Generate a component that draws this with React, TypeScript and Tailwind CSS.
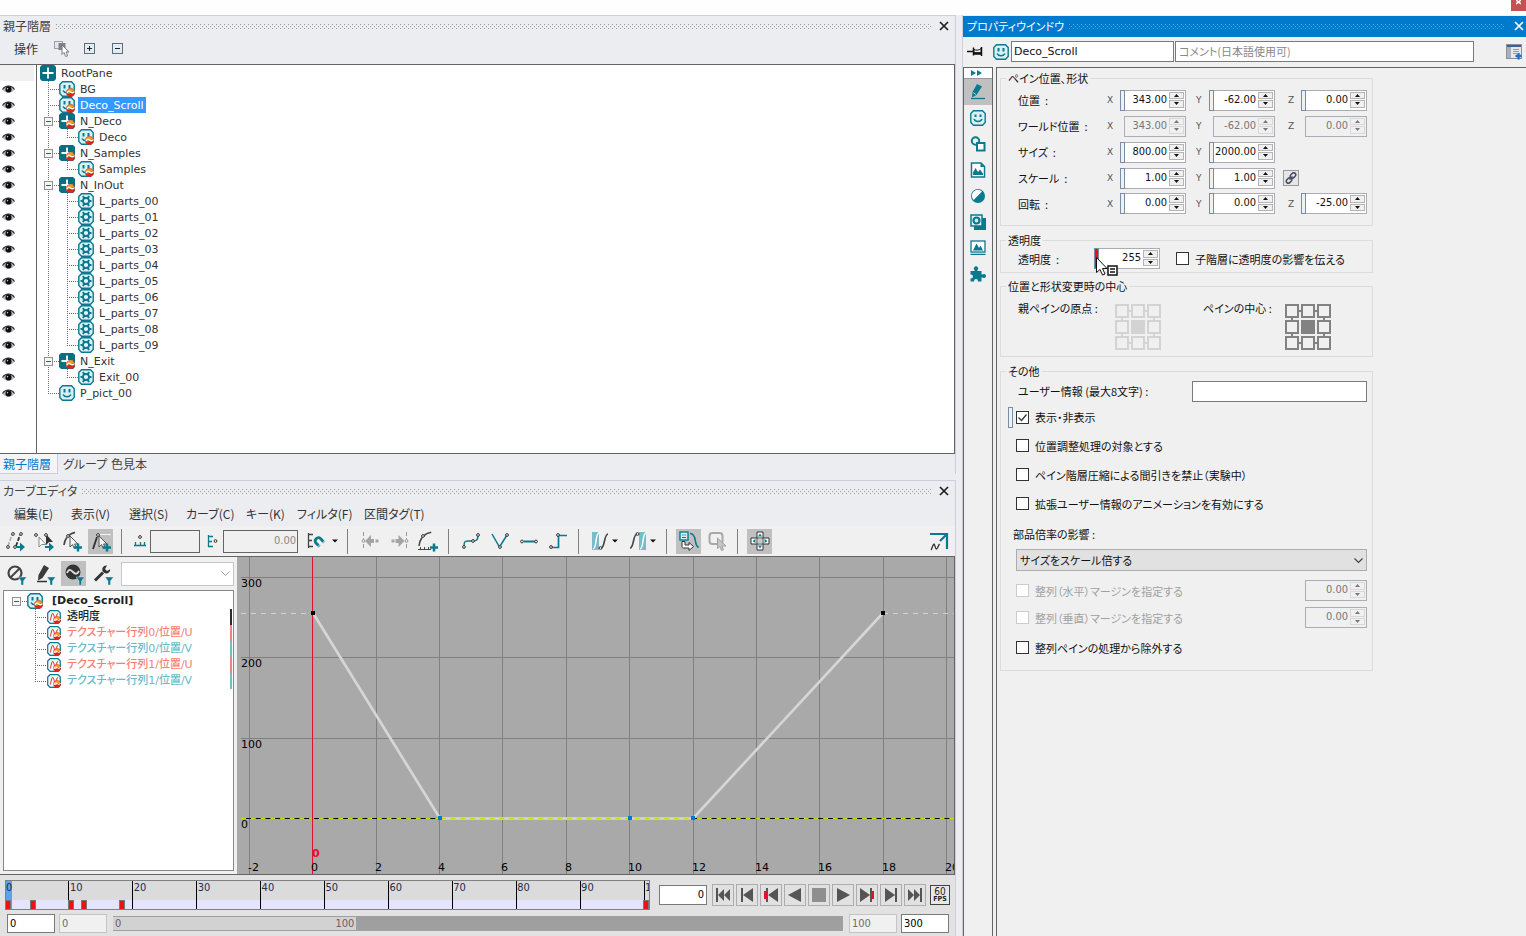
import { useId, type ReactNode } from "react";

const TEAL = "#0b7a8f";
const UI = "font-['Noto_Sans_CJK_JP',sans-serif] [font-feature-settings:'palt']";
const NUM = "font-['DejaVu_Sans_Condensed','DejaVu_Sans',sans-serif]";
const TREE = "font-['DejaVu_Sans','Noto_Sans_CJK_JP',sans-serif] [font-feature-settings:'palt']";

/* ---------- small drawings ---------- */

function Grip({ color }: { color: string }) {
  const id = useId();
  return (
    <svg className="h-[5px] min-w-0 flex-1" aria-hidden="true">
      <pattern id={id} width="4" height="4" patternUnits="userSpaceOnUse">
        <rect width="1" height="1" fill={color} />
        <rect x="2" y="2" width="1" height="1" fill={color} />
      </pattern>
      <rect width="100%" height="5" fill={`url(#${id})`} />
    </svg>
  );
}

function Cross({ color }: { color: string }) {
  return (
    <svg width="10" height="10" viewBox="0 0 10 10" fill="none" stroke={color} strokeWidth="1.7">
      <path d="M1 1l8 8M9 1l-8 8" />
    </svg>
  );
}

function Badge() {
  return (
    <>
      <path d="M7.500 11.500a4 4 0 0 1 8 0z" fill="#f0a020" />
      <path d="M7.500 11.500a4 4 0 0 0 8 0c-1.500-1.500-2.500-1-3.800 0s-3 1.500-4.200 0z" fill="#e2231a" />
      <circle cx="11.500" cy="11.500" r="4.200" fill="none" stroke="#e2231a" strokeWidth=".6" />
      <path d="M7.800 12c1.200-1.800 2.400-2 3.700-1s2.500 1.300 4-.4" stroke="#fff" strokeWidth="1.200" fill="none" />
    </>
  );
}

type Kind = "root" | "null" | "pic" | "picPlain" | "parts" | "curve";

const frame = "M3.500.800h9l2.700 2.700v9l-2.700 2.700h-9L.8 12.500v-9z";

function PaneIcon({ kind, size = 16 }: { kind: Kind; size?: number }) {
  return (
    <svg width={size} height={size} viewBox="0 0 16 16" className="shrink-0" aria-hidden="true">
      {(kind === "root" || kind === "null") && (
        <>
          <path d="M2 0h12l2 2v12l-2 2H2l-2-2V2z" fill="#086f85" />
          <path d="M8 2.500v11M2.500 8h11" stroke="#fff" strokeWidth="1.800" />
        </>
      )}
      {(kind === "pic" || kind === "picPlain") && (
        <>
          <path d={frame} fill="#d9f0f5" stroke={TEAL} strokeWidth="1.400" />
          <path d="M4.500 4h2v3.500h-2zM9.500 4h2v3.500h-2z" fill={TEAL} />
          <path d="M4 9.500c1.500 3 6.500 3 8 0" stroke={TEAL} strokeWidth="1.600" fill="none" />
        </>
      )}
      {kind === "parts" && (
        <>
          <path d={frame} fill="#d9f0f5" stroke={TEAL} strokeWidth="1.400" />
          <circle cx="8" cy="8" r="3" fill="#e9f8fb" stroke={TEAL} strokeWidth="1.800" />
          <path d="M5 3l1.300 2.400M11 3L9.700 5.400M5 13l1.300-2.400M11 13l-1.300-2.400M2.500 8H5M11 8h2.500" stroke={TEAL} strokeWidth="2" />
        </>
      )}
      {kind === "curve" && (
        <>
          <path d={frame} fill="#f1f8fa" stroke={TEAL} strokeWidth="1.400" />
          <path d="M3.500 12c1.500-1 1-8 3-8s1 5 2.500 5 1.500-4 3.500-5" stroke="#d34a4a" strokeWidth="1.200" fill="none" />
        </>
      )}
      {(kind === "null" || kind === "pic" || kind === "curve") && <Badge />}
    </svg>
  );
}

function Eye() {
  return (
    <svg width="13" height="9" viewBox="0 0 13 9" aria-hidden="true">
      <path d="M.5 4.500C3-.2 10-.2 12.500 4.500 10 9 3 9 .5 4.500z" fill="#bbb" />
      <path d="M.5 4.500C3 0 10 0 12.500 4.500" fill="none" stroke="#333" strokeWidth="1.200" />
      <circle cx="6.500" cy="4.500" r="3" fill="#0a0a14" />
      <circle cx="5.500" cy="3.700" r=".7" fill="#ddd" />
    </svg>
  );
}

type Guide = "tee" | "end" | "line" | "blank" | "teeBox" | "endBox";

function GuideCell({ type, first }: { type: Guide; first?: boolean }) {
  const box = type === "teeBox" || type === "endBox";
  const half = type === "end" || type === "endBox";
  return (
    <svg width="19" height="16" viewBox="0 0 19 16" className="shrink-0" shapeRendering="crispEdges" aria-hidden="true">
      {type !== "blank" && !first && (
        <path d={half ? "M8.500 0v9" : "M8.500 0v16"} stroke="#707070" strokeDasharray="1 1" />
      )}
      {type !== "blank" && type !== "line" && <path d="M8 8.500h11" stroke="#707070" strokeDasharray="1 1" />}
      {box && (
        <>
          <rect x="4.500" y="4.500" width="8" height="8" fill="#f6f6f6" stroke="#919191" />
          <path d="M6 8.500h5" stroke="#33539b" />
        </>
      )}
    </svg>
  );
}

/* ---------- hierarchy panel ---------- */

type Row = { name: string; kind: Kind; guides: Guide[]; selected?: boolean };

const rows: Row[] = [
  { name: "RootPane", kind: "root", guides: [] },
  { name: "BG", kind: "pic", guides: ["tee"] },
  { name: "Deco_Scroll", kind: "pic", guides: ["tee"], selected: true },
  { name: "N_Deco", kind: "null", guides: ["teeBox"] },
  { name: "Deco", kind: "pic", guides: ["line", "end"] },
  { name: "N_Samples", kind: "null", guides: ["teeBox"] },
  { name: "Samples", kind: "pic", guides: ["line", "end"] },
  { name: "N_InOut", kind: "null", guides: ["teeBox"] },
  ...Array.from({ length: 10 }, (_, i): Row => ({
    name: `L_parts_0${i}`,
    kind: "parts",
    guides: ["line", i === 9 ? "end" : "tee"],
  })),
  { name: "N_Exit", kind: "null", guides: ["teeBox"] },
  { name: "Exit_00", kind: "parts", guides: ["line", "end"] },
  { name: "P_pict_00", kind: "picPlain", guides: ["end"] },
];

function TitleBar({ title }: { title: string }) {
  return (
    <header className="flex h-[21px] items-center gap-[5px] pr-[6px] pb-px pl-[3px]">
      <h2 className="text-[12px] leading-4 whitespace-nowrap text-[#444]">{title}</h2>
      <Grip color="#999" />
      <button type="button" aria-label="閉じる" className="ml-[2px]">
        <Cross color="#1e1e1e" />
      </button>
    </header>
  );
}

function HierarchyPanel() {
  return (
    <section className="border-t border-r border-[#cccedb]">
      <TitleBar title="親子階層" />
      <div className="flex h-[27px] items-center pb-1 pl-[14px] text-[12px] text-[#333]">
        <button type="button" className="w-[40px] text-left leading-4">操作</button>
        <button type="button" aria-label="選択" className="mr-[14px]">
          <svg width="16" height="16" viewBox="0 0 16 16">
            <rect x=".5" y=".5" width="8" height="7" fill="#e4e8ee" stroke="#9aa1ac" />
            <rect x="4.500" y="2" width="7" height="7" fill="#7d828a" />
            <path d="M8 4v9.500l2-2 1.700 4 2-.8-1.700-3.700H15z" fill="#fff" stroke="#777" />
          </svg>
        </button>
        <button type="button" aria-label="展開" className="mr-[17px]">
          <svg width="11" height="11" viewBox="0 0 11 11" shapeRendering="crispEdges">
            <rect x=".5" y=".5" width="10" height="10" fill="#e4ecf3" stroke="#5b6e80" />
            <path d="M3 5.500h5M5.500 3v5" stroke="#222" />
          </svg>
        </button>
        <button type="button" aria-label="折りたたみ">
          <svg width="11" height="11" viewBox="0 0 11 11" shapeRendering="crispEdges">
            <rect x=".5" y=".5" width="10" height="10" fill="#e4ecf3" stroke="#5b6e80" />
            <path d="M3 5.500h5" stroke="#222" />
          </svg>
        </button>
      </div>
      <div className="flex min-h-[390px] border-y border-r border-[#646464] bg-white">
        <div className="w-[37px] shrink-0 border-r border-[#646464]">
          {rows.map((r, i) =>
            i === 0 ? (
              <div key={r.name} className="mr-[2px] h-4 bg-[#f0f0f0]" />
            ) : (
              <div key={r.name} className="flex h-4 items-center pl-[2px]">
                <Eye />
              </div>
            )
          )}
        </div>
        <ul className={`pl-[3px] text-[11px] leading-4 text-[#333] ${TREE}`}>
          {rows.map((r) => (
            <li key={r.name} className="flex h-4 items-center">
              {r.guides.map((g, i) => (
                <GuideCell key={i} type={g} />
              ))}
              <PaneIcon kind={r.kind} />
              <span className={r.selected ? "ml-[3px] h-4 bg-[#3399ff] px-[2px] pt-[2px] leading-[14px] text-white" : "ml-[3px] h-4 px-[2px] pt-[2px] leading-[14px]"}>
                {r.name}
              </span>
            </li>
          ))}
        </ul>
      </div>
      <nav className="flex h-5 text-[12px] leading-5 text-[#444]">
        <button type="button" className="w-[58px] border-r border-b border-[#cccedb] bg-[#f5f5f8] pl-[3px] text-left text-[#007acc]">
          親子階層
        </button>
        <button type="button" className="w-[50px] pl-[5px] text-left whitespace-nowrap">グループ</button>
        <button type="button" className="pl-[3px]">色見本</button>
      </nav>
    </section>
  );
}

/* ---------- curve editor ---------- */

function Tool({ label, active, children }: { label: string; active?: boolean; children: ReactNode }) {
  return (
    <button
      type="button"
      aria-label={label}
      className={
        active
          ? "flex h-[25px] w-[25px] shrink-0 items-center justify-center bg-[#c0c0c0]"
          : "flex h-[25px] w-[25px] shrink-0 items-center justify-center"
      }
    >
      <svg width="22" height="22" viewBox="0 0 22 22" fill="none">
        {children}
      </svg>
    </button>
  );
}

const Sep = () => <span className="h-[25px] w-px shrink-0 bg-[#808080]" />;

const Caret = () => (
  <svg width="6" height="4" viewBox="0 0 6 4" className="shrink-0">
    <path d="M0 .5h6L3 3.500z" fill="#111" />
  </svg>
);

const Plus = () => <path d="M13 17.500h8M17 13.500v8" stroke={TEAL} strokeWidth="2.500" />;
const Arrow = () => <path d="M13 16h4v-3.500l5 4.500-5 4.500V18h-4z" fill={TEAL} />;
const Pointer = () => <path d="M9 6v11l2.500-2.500 1.800 4 2-1-1.800-3.500H17z" fill="#f4f4f4" stroke="#555" />;
const Dot = ({ x, y }: { x: number; y: number }) => (
  <circle cx={x} cy={y} r="1.400" fill="#f0f0f0" stroke="#333" />
);

function CurveToolbar() {
  return (
    <div className="flex h-[30px] items-center overflow-hidden bg-[#f0f0f0] pl-px">
      <div className="flex gap-1">
        <Tool label="キー移動">
          <path d="M5 16L9 5" stroke="#aaa" strokeWidth="1.600" strokeDasharray="4 1.500" />
          <path d="M13 16l4-11" stroke="#333" strokeWidth="1.800" strokeDasharray="4 1.500" />
          <Dot x={5} y={17} />
          <Dot x={10} y={4} />
          <Dot x={12} y={17} />
          <Dot x={18} y={4} />
          <Arrow />
        </Tool>
        <Tool label="キー選択">
          <path d="M7 7v10l2.500-2.500H14z" fill="#fff" stroke="#888" />
          <path d="M14 4v11l3-3h4z" fill="#333" />
          <Dot x={4} y={5} />
          <Dot x={14} y={5} />
          <Arrow />
        </Tool>
        <Tool label="曲線キー追加">
          <path d="M3 15C4 8 8 3 16 2" stroke="#444" strokeWidth="1.700" strokeDasharray="8 2" />
          <Pointer />
          <Dot x={7} y={6} />
          <Plus />
        </Tool>
        <Tool label="直線キー追加" active>
          <path d="M3 19L7 7" stroke="#333" strokeWidth="1.900" />
          <path d="M10 4.500h11" stroke="#f4f4f4" />
          <Pointer />
          <Dot x={8} y={5} />
          <Plus />
        </Tool>
      </div>
      <span className="ml-2" />
      <Sep />
      <svg width="14" height="14" viewBox="0 0 14 14" className="ml-[11px] shrink-0" fill="none">
        <path d="M1 11.500h12M2.500 8v4M7.500 8v4M11.500 8v4" stroke={TEAL} strokeWidth="1.300" />
        <Dot x={7} y={3} />
      </svg>
      <input aria-label="フレーム" className="ml-[3px] h-[23px] w-[50px] shrink-0 border border-[#646464] bg-[#f0f0f0] px-1" />
      <svg width="11" height="14" viewBox="0 0 11 14" className="ml-[7px] shrink-0" fill="none">
        <path d="M1.500 1v12M1 2.500h5M1 7.500h4M1 12.500h5" stroke={TEAL} strokeWidth="1.300" />
        <Dot x={8.5} y={7} />
      </svg>
      <input
        aria-label="値"
        defaultValue="0.00"
        className={`ml-[5px] h-[23px] w-[75px] shrink-0 border border-[#646464] bg-[#f0f0f0] pr-[1px] pb-[2px] text-right text-[11px] text-[#888] ${NUM}`}
      />
      <button type="button" aria-label="スナップ" className="ml-[9px] flex shrink-0 items-center gap-[6px]">
        <svg width="19" height="18" viewBox="0 0 19 18" fill="none">
          <path d="M1.500 1v15M1 2.500h5M1 8.500h4M1 14.500h5" stroke="#444" strokeWidth="1.300" />
          <path d="M12.500 14.500L9 11c-2.500-3 1.500-7 4.500-4.500l3.500 4" stroke={TEAL} strokeWidth="2.800" />
          <path d="M10.500 15l3.500-3.500M15 11.500l3-3" stroke="#f0f0f0" />
        </svg>
        <Caret />
      </button>
      <span className="ml-[9px]" />
      <Sep />
      <div className="mr-[8px] ml-[9px] flex shrink-0 gap-1">
        <Tool label="前へ">
          <path d="M4.500 2v18" stroke="#999" strokeDasharray="4 2" />
          <path d="M6 11l6-6v12zM12 9h3v4h-3zM16.500 9.500h3v3h-3z" fill="#a4a4a4" />
          <circle cx="4.500" cy="11" r="1.400" fill="#f0f0f0" stroke="#999" />
        </Tool>
        <Tool label="次へ">
          <path d="M18.500 2v18" stroke="#999" strokeDasharray="4 2" />
          <path d="M16.500 11l-6-6v12zM7.500 9h3v4h-3zM3.500 9.500h3v3h-3z" fill="#a4a4a4" />
          <circle cx="18.500" cy="11" r="1.400" fill="#f0f0f0" stroke="#999" />
        </Tool>
        <Tool label="補間キー">
          <path d="M2 16C3 8 7 3 16 2" stroke="#444" strokeWidth="1.600" strokeDasharray="9 2" />
          <path d="M1 19.500h13M3.500 17v3M7.500 17v3M11.500 17v3" stroke="#444" />
          <Dot x={6} y={6} />
          <Plus />
        </Tool>
      </div>
      <Sep />
      <div className="mr-[8px] ml-[9px] flex shrink-0 gap-1">
        <Tool label="スプライン">
          <path d="M4 16c0-6 2-5 7-5s7 0 7-6" stroke={TEAL} strokeWidth="1.500" />
          <Dot x={4} y={17} />
          <Dot x={13} y={11} />
          <Dot x={18} y={5} />
        </Tool>
        <Tool label="直線">
          <path d="M3 4l7.500 13L18 5" stroke={TEAL} strokeWidth="1.500" />
          <Dot x={11} y={17} />
          <Dot x={18} y={5} />
        </Tool>
        <Tool label="水平">
          <path d="M6 11.500h11" stroke={TEAL} strokeWidth="2" />
          <Dot x={4} y={11.5} />
          <Dot x={18} y={11.5} />
        </Tool>
        <Tool label="ステップ">
          <path d="M5 17.500h6.500v-12H20" stroke={TEAL} strokeWidth="1.700" />
          <Dot x={4} y={17} />
          <Dot x={11} y={5} />
        </Tool>
      </div>
      <Sep />
      <button type="button" aria-label="前補間" className="ml-3 flex h-[25px] w-[34px] shrink-0 items-center gap-[3px]">
        <svg width="18" height="20" viewBox="0 0 18 20" fill="none">
          <rect x="1" y="1" width="7" height="18" fill="#78bcc8" />
          <path d="M2 18c4 0 2-16 6-16" stroke="#fff" strokeWidth="1.500" />
          <path d="M10 17c4 0 3-14 7-14" stroke="#444" strokeWidth="1.600" />
          <Dot x={9.5} y={17} />
        </svg>
        <Caret />
      </button>
      <button type="button" aria-label="後補間" className="ml-1 flex h-[25px] w-[34px] shrink-0 items-center gap-[3px]">
        <svg width="18" height="20" viewBox="0 0 18 20" fill="none">
          <rect x="10" y="1" width="7" height="18" fill="#78bcc8" />
          <path d="M11 18c4 0 2-16 6-16" stroke="#fff" strokeWidth="1.500" />
          <path d="M1 17c4 0 3-14 7-14" stroke="#444" strokeWidth="1.600" />
          <Dot x={8.5} y={3} />
        </svg>
        <Caret />
      </button>
      <span className="ml-[3px]" />
      <Sep />
      <div className="mr-[7px] ml-[9px] flex shrink-0 gap-1">
        <Tool label="ペイン連動" active>
          <rect x="2" y="2" width="8" height="8" fill="#d9f0f5" stroke={TEAL} strokeWidth="1.400" />
          <path d="M4 5h1.500M6.500 5H8M4 7.500h4" stroke={TEAL} strokeWidth="1.200" />
          <path d="M12 3.500c4 0 5 4 5.500 8 .5 3.500 1.500 5 3 6" stroke={TEAL} strokeWidth="1.600" />
          <path d="M4 11.500v5c0 1 .5 1.500 1.500 1.500H11v2.500l4.500-4-4.500-4V15H7v-3.500z" fill="#fff" stroke="#333" />
        </Tool>
        <Tool label="選択連動">
          <rect x="2.500" y="3" width="13" height="11" rx="3" stroke="#a8a8a8" strokeWidth="2" />
          <path d="M10.500 8v10.500l2.500-2 1.500 4 2-.8-1.500-3.700H19z" fill="#c6c6c6" stroke="#a0a0a0" />
        </Tool>
      </div>
      <Sep />
      <span className="ml-[9px]" />
      <Tool label="全体表示" active>
        <path d="M8 2h6v6H8zM8 14h6v6H8zM2 8h6v6H2zM14 8h6v6h-6z" fill="#fff" stroke="#333" />
        <path d="M8.500 8.500h5v5h-5z" fill="#c8c8c8" />
        <path d="M11 3.500l2 3H9zM11 18.500l2-3H9zM3.500 11l3-2v4zM18.500 11l-3-2v4z" fill={TEAL} />
      </Tool>
      <button type="button" aria-label="拡大" className="mr-[6px] ml-auto shrink-0">
        <svg width="19" height="19" viewBox="0 0 19 19" fill="none">
          <path d="M0 2h17v15M17 2l-7 7" stroke={TEAL} strokeWidth="2.200" />
          <path d="M1 18c1-1 1.500-5 3-6 1 0 1 5 2.500 5 1 0 1.500-3 3-5" stroke="#333" strokeWidth="1.300" />
        </svg>
      </button>
    </div>
  );
}

const Funnel = () => <path d="M13 14h8.500L18.500 18v4h-2.500v-4z" fill={TEAL} stroke="#f0f0f0" strokeWidth=".4" />;

const curves = [
  { name: "透明度", text: "text-[#222]", bar: "bg-[#2b2b2b]" },
  { name: "テクスチャー行列0/位置/U", text: "text-[#f57f76]", bar: "bg-[#f58080]" },
  { name: "テクスチャー行列0/位置/V", text: "text-[#6abac4]", bar: "bg-[#74bdc5]" },
  { name: "テクスチャー行列1/位置/U", text: "text-[#f57f76]", bar: "bg-[#f58080]" },
  { name: "テクスチャー行列1/位置/V", text: "text-[#6abac4]", bar: "bg-[#74bdc5]" },
];

function CurveList() {
  return (
    <div className="flex w-[237px] shrink-0 flex-col bg-[#f0f0f0] pr-[3px] pb-[3px] pl-[3px]">
      <div className="flex h-[33px] items-center gap-1">
        <div className="flex w-[114px] gap-1">
          <Tool label="クリア">
            <circle cx="10" cy="10" r="6.500" stroke="#444" strokeWidth="2.200" />
            <path d="M5.500 14.500l9-9" stroke="#444" strokeWidth="2" />
            <Funnel />
          </Tool>
          <Tool label="編集">
            <path d="M10 2l5 3-6.500 10L4 17.500l.5-5.500z" fill="#3a3a3a" />
            <path d="M3 18.500h10" stroke="#333" strokeWidth="1.500" />
            <Funnel />
          </Tool>
          <Tool label="カーブ表示" active>
            <circle cx="10" cy="9" r="7.500" fill="#333" />
            <path d="M4 10c2-5 4-3 6-1s4 3 6-1" stroke="#ddd" strokeWidth="1.800" />
            <Funnel />
          </Tool>
          <Tool label="設定">
            <path d="M3 17.500l8-8" stroke="#333" strokeWidth="3" />
            <path d="M15 2.500a4 4 0 1 0 3.200 3.700L15 8l-2-2z" fill="#333" />
            <Funnel />
          </Tool>
        </div>
        <div className="relative min-w-0 flex-1">
          <select aria-label="絞り込み" className="block h-6 w-full appearance-none border border-[#c8c8c8] bg-white" />
          <svg width="9" height="6" viewBox="0 0 9 6" className="pointer-events-none absolute top-[9px] right-[4px]" fill="none">
            <path d="M.5.500l4 4 4-4" stroke="#999" />
          </svg>
        </div>
      </div>
      <ul className={`flex-1 border border-[#828790] bg-white pt-[2px] text-[11px] leading-4 ${TREE}`}>
        <li className="flex h-4 items-center pl-1">
          <GuideCell type="endBox" first />
          <PaneIcon kind="pic" />
          <span className="pl-[9px] font-bold text-[#222]">[Deco_Scroll]</span>
        </li>
        {curves.map((c, i) => (
          <li key={c.name} className="flex h-4 items-center pr-px pl-[23px]">
            <GuideCell type={i === 4 ? "end" : "tee"} />
            <span className="ml-px">
              <PaneIcon kind="curve" size={14} />
            </span>
            <span className={`flex-1 pl-[6px] font-medium whitespace-nowrap ${c.text}`}>{c.name}</span>
            <span className={`h-4 w-[2px] ${c.bar}`} />
          </li>
        ))}
      </ul>
    </div>
  );
}

const frameLines = [
  [12, "-2"], [75, "0"], [139, "2"], [202, "4"], [265, "6"], [329, "8"],
  [392, "10"], [456, "12"], [519, "14"], [582, "16"], [646, "18"], [709, "20"],
] as const;

const valueLines = [[20, "300"], [100, "200"], [181, "100"], [261, "0"]] as const;

function CurveGraph() {
  return (
    <div className="min-w-0 flex-1 border-r border-[#646464] bg-[#a9a9a9]">
      <svg width="100%" height="317" className={`block text-[11px] ${TREE}`} role="img" aria-label="カーブ">
        <g stroke="#808080" shapeRendering="crispEdges">
          {frameLines.map(([x]) => (
            <line key={x} x1={x + 0.5} x2={x + 0.5} y1="0" y2="317" />
          ))}
          {valueLines.slice(0, 3).map(([y]) => (
            <line key={y} x1="4" x2="100%" y1={y + 0.5} y2={y + 0.5} />
          ))}
        </g>
        <line x1="4" x2="76" y1="56.500" y2="56.500" stroke="#d3d3d3" strokeDasharray="5 5" />
        <line x1="646" x2="100%" y1="56.500" y2="56.500" stroke="#d3d3d3" strokeDasharray="5 5" />
        <line x1="4" x2="100%" y1="261.500" y2="261.500" stroke="#bfe000" />
        <line x1="9" x2="100%" y1="261.500" y2="261.500" stroke="#000" strokeDasharray="5 4.700" />
        <path d="M76 56L203 261.500H456L646 56" fill="none" stroke="#d6d6d6" strokeWidth="2.700" />
        <line x1="204" x2="456" y1="261.500" y2="261.500" stroke="#bfe000" strokeDasharray="5 4.700" />
        <line x1="75.500" x2="75.500" y1="0" y2="317" stroke="#e0122c" />
        <rect x="74" y="54" width="4" height="4" fill="#000" />
        <rect x="644" y="54" width="4" height="4" fill="#000" />
        {[201, 391, 454].map((x) => (
          <rect key={x} x={x} y="259" width="4" height="4" fill="#0078d0" />
        ))}
        <g fill="#000">
          {valueLines.map(([y, t]) => (
            <text key={t} x="4" y={y + 10}>{t}</text>
          ))}
          {frameLines.map(([x, t]) => (
            <text key={t} x={x - 1} y="314">{t}</text>
          ))}
        </g>
        <text x="75" y="300" fill="#e0122c" fontWeight="bold">0</text>
      </svg>
    </div>
  );
}

const keyMarks = [0, 25, 63, 76, 114, 638];

function PlayButton({ label, children }: { label: string; children: ReactNode }) {
  return (
    <button type="button" aria-label={label} className="flex h-[22px] w-[22px] items-center justify-center border border-[#adadad] bg-[#e1e1e1]">
      <svg width="18" height="18" viewBox="0 0 18 18" fill="#555">
        {children}
      </svg>
    </button>
  );
}

function Timeline() {
  return (
    <footer className={`flex flex-col gap-1 border-t border-[#646464] bg-[#e2e2e2] pt-[5px] pr-[5px] pb-[3px] pl-[5px] ${NUM}`}>
      <div className="flex items-center">
        <svg height="30" className="block min-w-0 flex-1 border border-[#808080] bg-[#dbdbdb] text-[11px]" role="img" aria-label="タイムライン">
          <rect x="0" y="19" width="100%" height="10" fill="#e4e4fe" />
          <rect x="0" y="0" width="6" height="29" fill="#5aa2ea" />
          {Array.from({ length: 11 }, (_, i) => (
            <g key={i}>
              {i > 0 && <line x1={i * 63.9 - 1} x2={i * 63.9 - 1} y1="0" y2="30" stroke="#000" shapeRendering="crispEdges" />}
              <text x={i * 63.9} y="10" fill="#2a2a4a">{i * 10}</text>
            </g>
          ))}
          {keyMarks.map((x) => (
            <rect key={x} x={x - 0.5} y="19.500" width="5" height="9" fill="#ee1111" stroke="#777" />
          ))}
        </svg>
        <input aria-label="現在フレーム" defaultValue="0" className="ml-[9px] h-5 w-12 border border-[#7a7a7a] bg-white pr-[2px] pb-[2px] text-right text-[11px]" />
        <div className="ml-[5px] flex gap-[2px]">
          <PlayButton label="先頭へ">
            <path d="M2 2h2v14H2zM10 3v12L4 9zM16 3v12l-6-6z" />
          </PlayButton>
          <PlayButton label="前のフレーム">
            <path d="M3 2h2v14H3zM15 2v14L5 9z" />
          </PlayButton>
          <PlayButton label="前のキー">
            <path d="M4 2h2v14H4zM16 2v14L6 9z" />
            <rect x="2" y="5" width="3" height="8" fill="#e0122c" />
          </PlayButton>
          <PlayButton label="逆再生">
            <path d="M15 2v14L2 9z" />
          </PlayButton>
          <PlayButton label="停止">
            <rect x="2" y="2" width="14" height="14" fill="#8f8f8f" />
          </PlayButton>
          <PlayButton label="再生">
            <path d="M3 2v14l13-7z" />
          </PlayButton>
          <PlayButton label="次のキー">
            <path d="M12 2h2v14h-2zM2 2v14l10-7z" />
            <rect x="13" y="5" width="3" height="8" fill="#e0122c" />
          </PlayButton>
          <PlayButton label="次のフレーム">
            <path d="M13 2h2v14h-2zM3 2v14l10-7z" />
          </PlayButton>
          <PlayButton label="末尾へ">
            <path d="M14 2h2v14h-2zM8 3v12l6-6zM2 3v12l6-6z" />
          </PlayButton>
        </div>
        <button type="button" className="ml-1 flex h-5 w-5 flex-col items-center justify-center border border-[#444] bg-[#e8e8e8] text-[#222]">
          <span className="text-[10px] leading-[9px]">60</span>
          <span className="text-[7px] leading-[7px] font-bold">FPS</span>
        </button>
      </div>
      <div className="flex items-center pl-[2px] text-[11px]">
        <input aria-label="開始" defaultValue="0" className="h-[19px] w-12 border border-[#7a7a7a] bg-white px-[2px] pb-px" />
        <input aria-label="表示開始" defaultValue="0" disabled className="ml-1 h-[19px] w-12 border border-[#c4c4c4] bg-[#f0f0f0] px-[2px] pb-px text-[#6d6d6d]" />
        <div className="mr-[6px] ml-[6px] flex h-[15px] min-w-0 flex-1 bg-[#9f9f9f]">
          <div className="flex w-1/3 items-center justify-between border-y border-[#9f9f9f] bg-[#d2d2d2] px-[2px] leading-[13px] text-[#6d6060]">
            <span>0</span>
            <span>100</span>
          </div>
        </div>
        <input aria-label="表示終了" defaultValue="100" disabled className="h-[19px] w-12 border border-[#c4c4c4] bg-[#f0f0f0] px-[2px] pb-px text-[#6d6d6d]" />
        <input aria-label="終了" defaultValue="300" className="mr-px ml-1 h-[19px] w-12 border border-[#7a7a7a] bg-white px-[2px] pb-px" />
      </div>
    </footer>
  );
}

function CurveEditor() {
  const menus: [string, string][] = [
    ["編集(E)", "w-[57px]"],
    ["表示(V)", "w-[58px]"],
    ["選択(S)", "w-[57px]"],
    ["カーブ(C)", "w-[60px]"],
    ["キー(K)", "w-[51px]"],
    ["フィルタ(F)", "w-[67px]"],
    ["区間タグ(T)", "w-[67px]"],
  ];
  return (
    <section className="flex flex-1 flex-col border-t border-r border-[#cccedb]">
      <TitleBar title="カーブエディタ" />
      <nav className="flex h-6 items-center pb-px pl-[14px] text-[12px] text-[#333]">
        {menus.map(([m, w]) => (
          <button key={m} type="button" className={`text-left leading-4 whitespace-nowrap ${w}`}>
            {m}
          </button>
        ))}
      </nav>
      <CurveToolbar />
      <div className="flex flex-1 border-t border-[#646464]">
        <CurveList />
        <CurveGraph />
      </div>
      <Timeline />
    </section>
  );
}

/* ---------- property window ---------- */

type Mark = "none" | "bar" | "red";

function Spin({ label, value, mark = "bar", disabled }: { label: string; value: string; mark?: Mark; disabled?: boolean }) {
  return (
    <div className="flex h-[21px] w-[66px] shrink-0 justify-end">
      {mark === "bar" && <span className="w-[5px] shrink-0 border border-[#7b8ba0] bg-[#f0f0f0]" />}
      {mark === "red" && <span className="w-[5px] shrink-0 border border-[#7b8ba0] bg-[#ee1111]" />}
      <div className={disabled ? "flex w-[62px] border border-[#abadb3] bg-[#f0f0f0]" : "flex w-[62px] border border-l-0 border-[#abadb3] bg-white"}>
        <input
          aria-label={label}
          defaultValue={value}
          disabled={disabled}
          className={`w-full min-w-0 flex-1 bg-transparent pr-[2px] pb-px text-right text-[11px] disabled:text-[#777] ${NUM}`}
        />
        <div className="mr-px flex w-[15px] flex-col gap-px pt-px pb-[2px]">
          {["増やす", "減らす"].map((t, i) => (
            <button
              key={t}
              type="button"
              aria-label={`${label} ${t}`}
              disabled={disabled}
              className="flex flex-1 items-center justify-center border border-[#b4b4b4] bg-[#f0f0f0] text-[#111] disabled:border-[#d8d8d8] disabled:text-[#777]"
            >
              <svg width="5" height="3" viewBox="0 0 5 3" fill="currentColor">
                <path d={i ? "M0 0h5L2.500 3z" : "M2.500 0L5 3H0z"} />
              </svg>
            </button>
          ))}
        </div>
      </div>
    </div>
  );
}

function Group({ title, children }: { title: string; children: ReactNode }) {
  return (
    <fieldset className="w-[373px] min-w-0 border border-[#dcdcdc]">
      <legend className="ml-[5px] px-[2px] text-[11px] leading-4">{title}</legend>
      {children}
    </fieldset>
  );
}

function Check({ label, checked, disabled }: { label: string; checked?: boolean; disabled?: boolean }) {
  return (
    <label className={disabled ? "flex items-center gap-[6px] text-[#a0a0a0]" : "flex items-center gap-[6px]"}>
      <span className="relative flex">
        <input
          type="checkbox"
          defaultChecked={checked}
          disabled={disabled}
          className="peer h-[13px] w-[13px] appearance-none border border-[#333] bg-white disabled:border-[#ccc]"
        />
        <svg viewBox="0 0 13 13" fill="none" className="pointer-events-none absolute inset-0 hidden h-[13px] w-[13px] peer-checked:block">
          <path d="M2.500 6.500l3 3 5-6" stroke="#333" strokeWidth="1.300" />
        </svg>
      </span>
      <span className="whitespace-nowrap">{label}</span>
    </label>
  );
}

function AnchorGrid({ label, color }: { label: string; color: string }) {
  return (
    <button type="button" aria-label={label}>
      <svg width="46" height="46" viewBox="0 0 46 46" fill="none" stroke={color} strokeWidth="2" shapeRendering="crispEdges">
        {[0, 16, 32].map((y) =>
          [0, 16, 32].map((x) => (
            <rect key={`${x}-${y}`} x={x + 1} y={y + 1} width="12" height="12" fill={x === 16 && y === 16 ? color : "none"} />
          ))
        )}
        <path d="M14 7h2M30 7h2M14 39h2M30 39h2M7 14v2M7 30v2M39 14v2M39 30v2" />
      </svg>
    </button>
  );
}

type Axis = [string, string];
const transform: { label: string; axes: Axis[]; disabled?: boolean; link?: boolean }[] = [
  { label: "位置", axes: [["X", "343.00"], ["Y", "-62.00"], ["Z", "0.00"]] },
  { label: "ワールド位置", axes: [["X", "343.00"], ["Y", "-62.00"], ["Z", "0.00"]], disabled: true },
  { label: "サイズ", axes: [["X", "800.00"], ["Y", "2000.00"]] },
  { label: "スケール", axes: [["X", "1.00"], ["Y", "1.00"]], link: true },
  { label: "回転", axes: [["X", "0.00"], ["Y", "0.00"], ["Z", "-25.00"]] },
];

function SideTab({ label, active, children }: { label: string; active?: boolean; children: ReactNode }) {
  return (
    <button
      type="button"
      aria-label={label}
      className={active ? "flex h-[26px] w-full items-center justify-center bg-[#c0c0c0]" : "flex h-[26px] w-full items-center justify-center"}
    >
      <svg width="16" height="16" viewBox="0 0 16 16" fill="none">
        {children}
      </svg>
    </button>
  );
}

function PropertyWindow() {
  return (
    <section className="flex w-[564px] shrink-0 flex-col border-l border-[#cccedb] bg-[#f0f0f0] text-[11px] leading-4 text-[#111]">
      <header className="mt-px flex h-[21px] items-center gap-[5px] bg-[#007acc] pr-[2px] pb-px pl-1">
        <h2 className="text-[11px] leading-4 whitespace-nowrap text-white">プロパティウインドウ</h2>
        <Grip color="#59a8de" />
        <button type="button" aria-label="閉じる" className="ml-1">
          <Cross color="#fff" />
        </button>
      </header>
      <div className="flex h-[30px] items-center pr-1 pb-px pl-1">
        <button type="button" aria-label="固定">
          <svg width="16" height="12" viewBox="0 0 16 12">
            <path d="M0 5.500h6M6.500 1.500v8M14.500 1v9" stroke="#111" strokeWidth="1.500" />
            <path d="M7 3.500c2 1 5 1 7-1v4.500H7z" fill="#eee" stroke="#111" />
            <path d="M7 7.500h7" stroke="#111" strokeWidth="2.500" />
          </svg>
        </button>
        <span className="ml-[10px]">
          <PaneIcon kind="picPlain" />
        </span>
        <input
          aria-label="ペイン名"
          defaultValue="Deco_Scroll"
          className={`ml-[2px] h-[21px] w-[163px] border border-[#7a7a7a] bg-white px-[2px] text-[11px] ${TREE}`}
        />
        <input
          aria-label="コメント"
          placeholder="コメント(日本語使用可)"
          className="ml-px h-[21px] min-w-0 flex-1 border border-[#7a7a7a] bg-white px-[3px] pb-[2px] text-[11px] placeholder:text-[#888]"
        />
        <button type="button" aria-label="ウインドウ追加" className="ml-8">
          <svg width="16" height="16" viewBox="0 0 16 16">
            <rect x=".5" y=".5" width="15" height="14" fill="#e8e8ec" stroke="#8a8f9a" />
            <path d="M1 1h14v2H1z" fill="#3f5f95" />
            <path d="M1 3h4v11H1z" fill="#a8b0bd" />
            <path d="M7 5.500h6M7 7.500h6M7 9.500h4" stroke="#999" />
            <path d="M9.500 12h6M12.500 9v6.500" stroke="#1a6fd0" strokeWidth="2.300" />
          </svg>
        </button>
      </div>
      <div className="flex flex-1 gap-[3px]">
        <nav className="w-[30px] shrink-0 border border-b-0 border-[#646464]">
          <button type="button" aria-label="展開" className="flex h-[11px] w-full items-center justify-center border-b border-[#999] bg-white pr-1">
            <svg width="11" height="6" viewBox="0 0 11 6" fill={TEAL}>
              <path d="M0 0l5 3-5 3zM6 0l5 3-5 3z" />
            </svg>
          </button>
          <SideTab label="基本" active>
            <path d="M7 0l5 2.500L6.500 11 2 13.500 2.500 8z" fill={TEAL} />
            <path d="M3 8.500l3 2" stroke="#c0c0c0" />
            <path d="M1 14.500h14" stroke={TEAL} strokeWidth="1.300" />
          </SideTab>
          <SideTab label="ペイン">
            <path d={frame} fill="#d9f0f5" stroke={TEAL} strokeWidth="1.400" />
            <path d="M4.500 4.500h2v2.500h-2zM9.500 4.500h2v2.500h-2z" fill={TEAL} />
            <path d="M4 9c1.500 3.300 6.500 3.300 8 0" stroke={TEAL} strokeWidth="1.600" />
          </SideTab>
          <SideTab label="形状">
            <circle cx="5.500" cy="5" r="3.700" stroke={TEAL} strokeWidth="2" />
            <rect x="7" y="7" width="7.500" height="7.500" fill="#fff" stroke={TEAL} strokeWidth="2" />
          </SideTab>
          <SideTab label="テクスチャ">
            <path d="M1.500 1H11l3.500 3.500V15h-13z" fill="#fff" stroke={TEAL} strokeWidth="1.500" />
            <path d="M3 13v-2.500L5.500 6 8 10l2-2.500 3 4V13zM10.500 1v4h4z" fill={TEAL} />
          </SideTab>
          <SideTab label="カラー">
            <circle cx="8" cy="8" r="7" fill={TEAL} />
            <path d="M3.600 12A5.500 5.500 0 0 1 12 3.600z" fill="#fff" />
          </SideTab>
          <SideTab label="合成">
            <path d="M4 4h12v12H4z" fill={TEAL} />
            <rect x="1" y="1" width="11" height="11" fill="#e9f5f8" stroke={TEAL} strokeWidth="1.500" />
            <circle cx="6.500" cy="6.500" r="3" fill="#cfe9f0" stroke={TEAL} strokeWidth="2.200" />
          </SideTab>
          <SideTab label="画像">
            <rect x="1" y="1" width="14" height="11" fill="#fff" stroke={TEAL} strokeWidth="1.300" />
            <path d="M3 10.500l3.500-7L9 8l1.500-2.500 2.500 5zM.5 13.700h15V15H.5z" fill={TEAL} />
          </SideTab>
          <SideTab label="拡張">
            <path d="M.5 5h11v10.500H.5z" fill={TEAL} />
            <path d="M4.500 2.500h3v4h-3zM11 8.500h3.500v3H11z" fill={TEAL} />
            <circle cx="6" cy="2.300" r="2.100" fill={TEAL} />
            <circle cx="14" cy="10" r="2" fill={TEAL} />
            <circle cx="1" cy="10.500" r="1.900" fill="#f0f0f0" />
            <circle cx="6" cy="15" r="1.900" fill="#f0f0f0" />
          </SideTab>
        </nav>
        <div className="flex min-w-0 flex-1 flex-col border-t border-l border-[#646464] pt-[2px] pl-[3px]">
          <Group title="ペイン位置、形状">
            <div className="pt-px pb-[9px] pl-[17px]">
              {transform.map((t) => (
                <div key={t.label} className="flex h-[26px] items-center last:h-[25px]">
                  <span className="w-[79px] whitespace-nowrap">{t.label}&nbsp; :</span>
                  {t.axes.map(([a, v]) => (
                    <span key={a} className={a === "Z" ? "flex w-[92px] items-center justify-end" : "flex w-[89px] items-center justify-end"}>
                      <span className={`w-[13px] text-[9px] text-[#555] ${TREE}`}>{a}</span>
                      <Spin label={`${t.label} ${a}`} value={v} disabled={t.disabled} mark={t.disabled ? "none" : "bar"} />
                    </span>
                  ))}
                  {t.link && (
                    <button type="button" aria-label="縦横比を固定" className="ml-2 flex h-4 w-4 items-center justify-center border border-[#999] bg-[#e6e6e6]">
                      <svg width="12" height="12" viewBox="0 0 12 12" fill="none" stroke="#4a4a68" strokeWidth="1.500">
                        <rect x="5" y="1.500" width="6" height="4" rx="2" transform="rotate(-45 8 3.500)" />
                        <rect x="1" y="6.500" width="6" height="4" rx="2" transform="rotate(-45 4 8.500)" />
                        <path d="M4.500 7.500l3-3" />
                      </svg>
                    </button>
                  )}
                </div>
              ))}
            </div>
          </Group>
          <div className="mt-[6px]">
            <Group title="透明度">
              <div className="flex h-6 items-center pb-[3px] pl-[17px]">
                <span className="w-[76px]">透明度&nbsp; :</span>
                <div className="relative mr-4">
                  <Spin label="透明度" value="255" mark="red" />
                  <svg width="24" height="22" viewBox="0 0 24 22" className="pointer-events-none absolute top-[9px] left-[2px]">
                    <path d="M.5.500v15l3.500-3 2.500 5.500 2.500-1-2.500-5.500H11z" fill="#fff" stroke="#111" />
                    <rect x="12" y="9" width="9" height="9" fill="#fff" stroke="#111" strokeWidth="1.500" />
                    <path d="M14 12h5M14 15h5" stroke="#111" strokeWidth="1.300" />
                  </svg>
                </div>
                <Check label="子階層に透明度の影響を伝える" />
              </div>
            </Group>
          </div>
          <div className="mt-[5px]">
            <Group title="位置と形状変更時の中心">
              <div className="flex pt-[10px] pb-[6px] pl-[17px]">
                <span className="-mt-1 w-[97px]">親ペインの原点&nbsp;:</span>
                <AnchorGrid label="親ペインの原点" color="#d3d3d3" />
                <span className="-mt-1 ml-[42px] w-[82px]">ペインの中心&nbsp;:</span>
                <AnchorGrid label="ペインの中心" color="#828282" />
              </div>
            </Group>
          </div>
          <div className="mt-[6px]">
            <Group title="その他">
              <div className="pr-[5px] pb-[6px] pl-[15px]">
                <label className="flex h-6 items-center justify-between pl-[2px]">
                  ユーザー情報 (最大8文字)&nbsp;:
                  <input className="h-[21px] w-[175px] border border-[#7a7a7a] bg-white px-1" />
                </label>
                <div className="-ml-2 flex h-7 items-center gap-[3px]">
                  <span className="h-[21px] w-[5px] border border-[#7b8ba0]" />
                  <Check label="表示・非表示" checked />
                </div>
                <div className="flex h-[29px] items-center"><Check label="位置調整処理の対象とする" /></div>
                <div className="flex h-[29px] items-center"><Check label="ペイン階層圧縮による間引きを禁止（実験中）" /></div>
                <div className="flex h-[29px] items-center"><Check label="拡張ユーザー情報のアニメーションを有効にする" /></div>
                <label htmlFor="scale-mode" className="-ml-[3px] flex h-[31px] items-center">部品倍率の影響&nbsp;:</label>
                <div className="relative">
                  <select id="scale-mode" className="block h-[22px] w-full appearance-none border border-[#adadad] bg-[#e1e1e1] px-[3px] text-[11px]">
                    <option>サイズをスケール倍する</option>
                  </select>
                  <svg width="9" height="6" viewBox="0 0 9 6" fill="none" className="pointer-events-none absolute top-[9px] right-1">
                    <path d="M.5.500l4 4 4-4" stroke="#444" strokeWidth="1.200" />
                  </svg>
                </div>
                <div className="mt-[6px] flex h-[27px] items-center justify-between">
                  <Check label="整列（水平）マージンを指定する" disabled />
                  <Spin label="水平マージン" value="0.00" mark="none" disabled />
                </div>
                <div className="flex h-[27px] items-center justify-between">
                  <Check label="整列（垂直）マージンを指定する" disabled />
                  <Spin label="垂直マージン" value="0.00" mark="none" disabled />
                </div>
                <div className="flex h-[33px] items-center"><Check label="整列ペインの処理から除外する" /></div>
              </div>
            </Group>
          </div>
        </div>
      </div>
    </section>
  );
}

export default function App() {
  return (
    <div className={`flex min-h-screen flex-col bg-[#fefefe] ${UI}`}>
      <div className="flex h-[15px] justify-end">
        <button type="button" aria-label="終了" className="flex h-[11px] w-[15px] items-start justify-center bg-[#c75050]">
          <svg width="5" height="5" viewBox="0 0 5 5" stroke="#fff" strokeWidth="1.500">
            <path d="M0 0l5 4M5 0L0 4" />
          </svg>
        </button>
      </div>
      <main className="flex flex-1 gap-[6px] bg-[#ecedf1]">
        <div className="flex min-w-0 flex-1 flex-col gap-[6px]">
          <HierarchyPanel />
          <CurveEditor />
        </div>
        <PropertyWindow />
      </main>
    </div>
  );
}
